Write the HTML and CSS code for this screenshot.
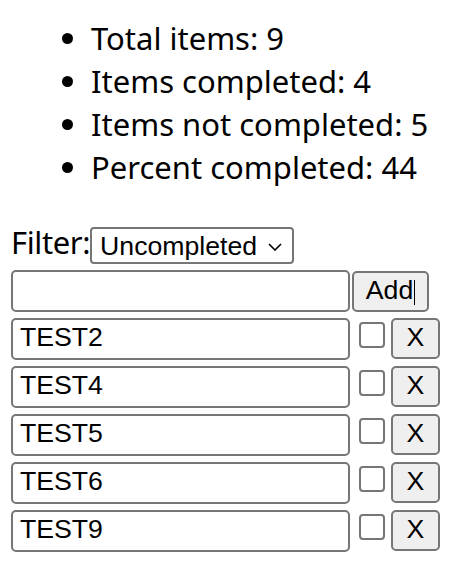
FILE: index.html
```html
<!DOCTYPE html>
<html lang="en">
<head>
<meta charset="utf-8">
<title>Todo</title>
<link rel="stylesheet" href="styles.css">
</head>
<body>
<ul class="stats">
  <li>Total items: 9</li>
  <li>Items completed: 4</li>
  <li>Items not completed: 5</li>
  <li>Percent completed: 44</li>
</ul>
<div class="filter">
  <label class="filter-label" for="filter">Filter:</label>
  <div class="select-wrap">
    <select id="filter" class="select">
      <option>All</option>
      <option>Completed</option>
      <option selected>Uncompleted</option>
    </select>
    <svg class="chevron" width="14" height="8" viewBox="0 0 14 8" aria-hidden="true"><path d="M1 1 L7 7 L13 1" fill="none" stroke="#000" stroke-width="1.6"/></svg>
  </div>
</div>
<div class="rows">
  <div class="row">
    <input class="field" type="text" value="">
    <button class="btn btn-add">Add<span class="caret"></span></button>
  </div>
  <div class="row">
    <input class="field" type="text" value="TEST2">
    <input class="check" type="checkbox">
    <button class="btn btn-x">X</button>
  </div>
  <div class="row">
    <input class="field" type="text" value="TEST4">
    <input class="check" type="checkbox">
    <button class="btn btn-x">X</button>
  </div>
  <div class="row">
    <input class="field" type="text" value="TEST5">
    <input class="check" type="checkbox">
    <button class="btn btn-x">X</button>
  </div>
  <div class="row">
    <input class="field" type="text" value="TEST6">
    <input class="check" type="checkbox">
    <button class="btn btn-x">X</button>
  </div>
  <div class="row">
    <input class="field" type="text" value="TEST9">
    <input class="check" type="checkbox">
    <button class="btn btn-x">X</button>
  </div>
</div>
</body>
</html>
```
FILE: styles.css
```css
html, body {
  background: #fff;
}
body {
  margin: 0;
  padding: 0 0 0 11px;
  font-family: "Noto Sans", "Open Sans", sans-serif;
  font-size: 31px;
  line-height: 43px;
  color: #000;
}
.stats {
  margin: 17px 0 32px;
  padding: 0 0 0 80px;
  list-style: disc;
}
.filter {
  display: flex;
  align-items: flex-start;
  height: 43px;
}
.filter-label {
  letter-spacing: -0.4px;
}
.select-wrap {
  position: relative;
  margin-top: 6px;
}
.select {
  appearance: none;
  -webkit-appearance: none;
  display: block;
  box-sizing: border-box;
  width: 204px;
  height: 37px;
  margin: 0;
  padding: 0 30px 0 8px;
  border: 2px solid #767676;
  border-radius: 4px;
  background: #fff;
  font-family: "Liberation Sans", Arial, sans-serif;
  font-size: 26.667px;
  color: #000;
}
.chevron {
  position: absolute;
  left: 178px;
  top: 16px;
  pointer-events: none;
}
.rows {
  display: flex;
  flex-direction: column;
  gap: 6px;
  margin-top: 6px;
}
.row {
  display: flex;
  align-items: flex-start;
  height: 42px;
}
.field {
  box-sizing: border-box;
  width: 339px;
  height: 42px;
  margin: 0;
  padding: 0 7px 3px;
  border: 2px solid #767676;
  border-radius: 5px;
  background: #fff;
  font-family: "Liberation Sans", Arial, sans-serif;
  font-size: 26.667px;
  color: #000;
  outline: none;
}
.btn {
  box-sizing: border-box;
  height: 41px;
  margin: 0;
  padding: 0 0 3px;
  border: 2px solid #767676;
  border-radius: 5px;
  background: #efefef;
  font-family: "Liberation Sans", Arial, sans-serif;
  font-size: 26.667px;
  color: #000;
  text-align: center;
}
.btn-add {
  width: 77px;
  margin: 1px 0 0 2px;
}
.caret {
  display: inline-block;
  width: 1px;
  height: 25px;
  margin-left: 1px;
  background: #000;
  vertical-align: -6px;
}
.check {
  appearance: none;
  -webkit-appearance: none;
  box-sizing: border-box;
  width: 26px;
  height: 26px;
  margin: 4px 0 0 9px;
  border: 2px solid #767676;
  border-radius: 4px;
  background: #fff;
}
.btn-x {
  width: 49px;
  margin-left: 6px;
}
```
